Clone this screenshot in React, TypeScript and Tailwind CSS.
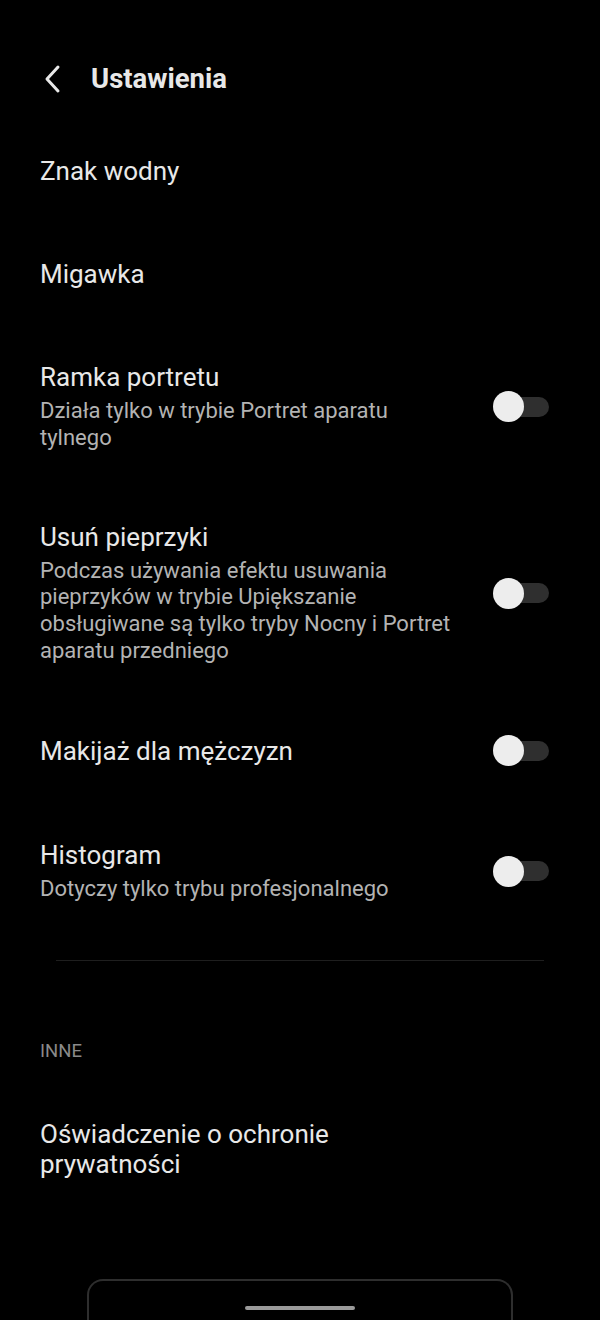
import React from 'react';

type Item = {
  title: string;
  sub?: string;
  toggle?: boolean;
};

const items: Item[] = [
  { title: 'Znak wodny' },
  { title: 'Migawka' },
  { title: 'Ramka portretu', sub: 'Działa tylko w trybie Portret aparatu tylnego', toggle: true },
  {
    title: 'Usuń pieprzyki',
    sub: 'Podczas używania efektu usuwania pieprzyków w trybie Upiększanie obsługiwane są tylko tryby Nocny i Portret aparatu przedniego',
    toggle: true,
  },
  { title: 'Makijaż dla mężczyzn', toggle: true },
  { title: 'Histogram', sub: 'Dotyczy tylko trybu profesjonalnego', toggle: true },
];

const Toggle = () => (
  <div className="relative w-[56px] h-[32px] flex items-center shrink-0">
    <div className="absolute left-[14px] right-0 h-[20px] rounded-full bg-[#2f2f2f]" />
    <div className="absolute left-0 w-[31px] h-[31px] rounded-full bg-[#ededed]" />
  </div>
);

const Row = ({ item }: { item: Item }) => (
  <div className={`flex items-center pl-[40px] pr-[51px] pt-[36px] ${item.sub ? 'pb-[34px]' : 'pb-[37px]'}`}>
    <div className="w-[422px] flex flex-col">
      <div className="text-[26px] leading-[30px] text-[#e8e8e8]">{item.title}</div>
      {item.sub && (
        <div className="mt-[6px] text-[22px] leading-[26.8px] text-[#b3b3b3]">{item.sub}</div>
      )}
    </div>
    <div className="flex-1" />
    {item.toggle && <Toggle />}
  </div>
);

export default function App() {
  return (
    <div
      className="w-[600px] h-[1320px] bg-black flex flex-col overflow-hidden"
      style={{ fontFamily: 'Roboto, "Noto Sans", sans-serif' }}
    >
      <div className="h-[120px] pt-[64px] flex items-start pl-[40px]">
        <div className="h-[30px] flex items-center gap-[27px]">
          <svg width="24" height="30" viewBox="0 0 24 30" fill="none">
            <path d="M18 3 L7 15 L18 27" stroke="#e8e8e8" strokeWidth="3" strokeLinecap="round" strokeLinejoin="round" />
          </svg>
          <span className="text-[27.5px] leading-[30px] font-bold text-[#e8e8e8]">Ustawienia</span>
        </div>
      </div>

      {items.map((item) => (
        <Row key={item.title} item={item} />
      ))}

      <div className="mx-[56px] mt-[23px] h-px bg-[#1e1e1e]" />

      <div className="pl-[40px] mt-[79px] text-[18.5px] leading-[22px] text-[#8a8a8a]">INNE</div>

      <div className="pl-[40px] pr-[51px] mt-[57px]">
        <div className="w-[320px] text-[26px] leading-[30px] text-[#e8e8e8]">
          Oświadczenie o ochronie prywatności
        </div>
      </div>

      <div className="flex-1" />

      <div className="mx-[87px] h-[41px] border-t-2 border-x-2 border-[#2e2e2e] rounded-t-[16px] flex items-end justify-center pb-[10px]">
        <div className="w-[110px] h-[4px] rounded-full bg-[#9a9a9a]" />
      </div>
    </div>
  );
}
